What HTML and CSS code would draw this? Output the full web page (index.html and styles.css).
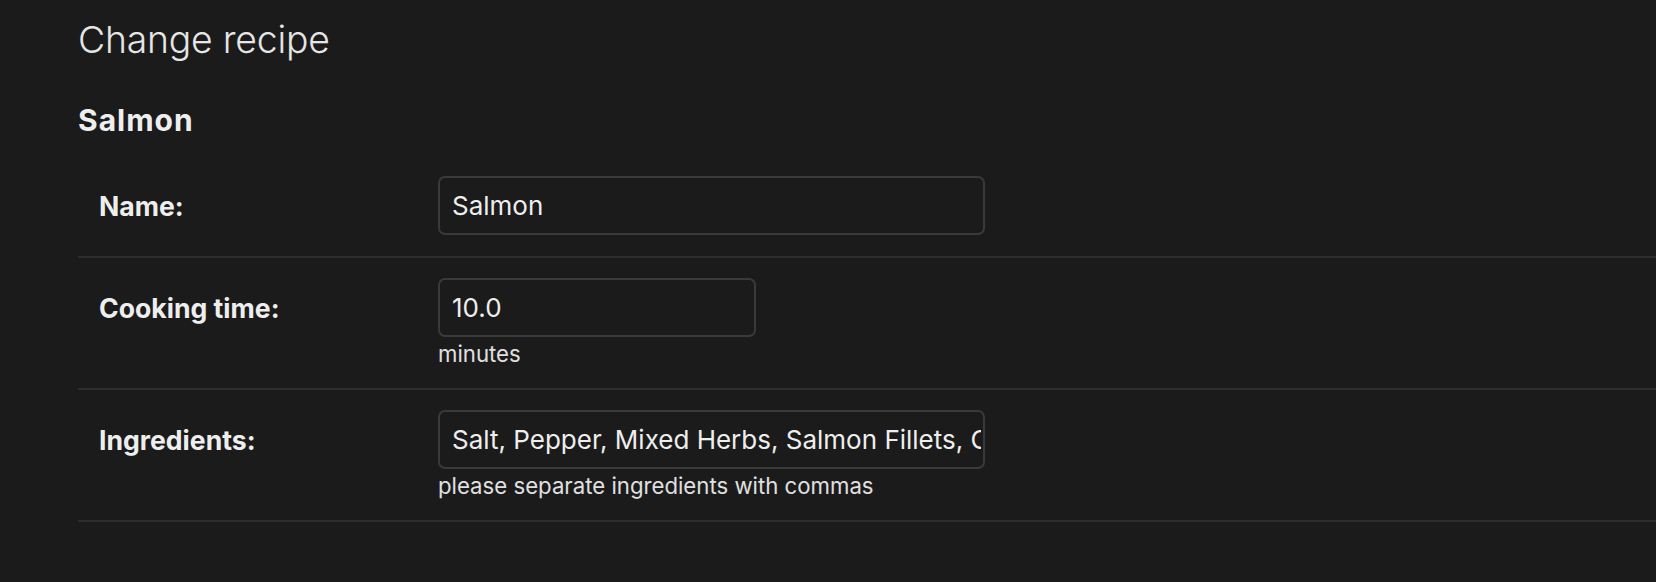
FILE: index.html
```html
<!DOCTYPE html>
<html lang="en">
<head>
<meta charset="utf-8">
<title>Change recipe</title>
<link rel="stylesheet" href="styles.css">
</head>
<body>
<div class="content">
  <h1 class="title">Change recipe</h1>
  <h2 class="subtitle">Salmon</h2>
  <form class="form">
    <fieldset class="fieldset">
      <div class="form-row">
        <label class="label" for="id_name">Name:</label>
        <div class="field">
          <input class="input input-wide" id="id_name" type="text" value="Salmon">
        </div>
      </div>
      <div class="form-row">
        <label class="label" for="id_time">Cooking time:</label>
        <div class="field">
          <input class="input input-narrow" id="id_time" type="text" value="10.0">
          <div class="help">minutes</div>
        </div>
      </div>
      <div class="form-row">
        <label class="label" for="id_ing">Ingredients:</label>
        <div class="field">
          <input class="input input-wide" id="id_ing" type="text" value="Salt, Pepper, Mixed Herbs, Salmon Fillets, Olive Oil">
          <div class="help">please separate ingredients with commas</div>
        </div>
      </div>
    </fieldset>
  </form>
</div>
</body>
</html>
```
FILE: styles.css
```css
html, body {
  margin: 0;
  padding: 0;
  background: #1b1b1b;
  color: #eeeeee;
  font-family: Inter, "Noto Sans", "DejaVu Sans", sans-serif;
}

.content {
  padding: 0 0 0 78px;
}

.title {
  margin: 0;
  padding-top: 16px;
  font-size: 37.3px;
  font-weight: 300;
  line-height: 48px;
  color: #e6e6e6;
  letter-spacing: -0.2px;
}

.subtitle {
  margin: 38px 0 0 0;
  font-size: 30px;
  font-weight: 700;
  line-height: 36px;
  letter-spacing: 1px;
  color: #eeeeee;
}

.form {
  margin: 0;
}

.fieldset {
  margin: 18px 0 0 0;
  padding: 0;
  border: none;
  min-width: 0;
}

.form-row {
  display: flex;
  align-items: flex-start;
  padding: 20px 0 21px 21px;
  border-bottom: 2px solid #2d2d2d;
}

.label {
  flex: 0 0 339px;
  font-size: 26.6px;
  font-weight: 700;
  line-height: 36px;
  padding-top: 12px;
  color: #eeeeee;
}

.field {
  display: flex;
  flex-direction: column;
}

.input {
  box-sizing: border-box;
  height: 59px;
  margin: 0;
  padding: 0 2px 0 12px;
  background: #1b1b1b;
  color: #eeeeee;
  border: 2px solid #3a3a3a;
  border-radius: 7px;
  font-family: Inter, "Noto Sans", "DejaVu Sans", sans-serif;
  font-size: 26px;
  outline: none;
}

.input-wide {
  width: 547px;
}

.input-narrow {
  width: 318px;
}

.help {
  margin-top: 3px;
  font-size: 22.2px;
  line-height: 27px;
  color: #e0e0e0;
}
```
